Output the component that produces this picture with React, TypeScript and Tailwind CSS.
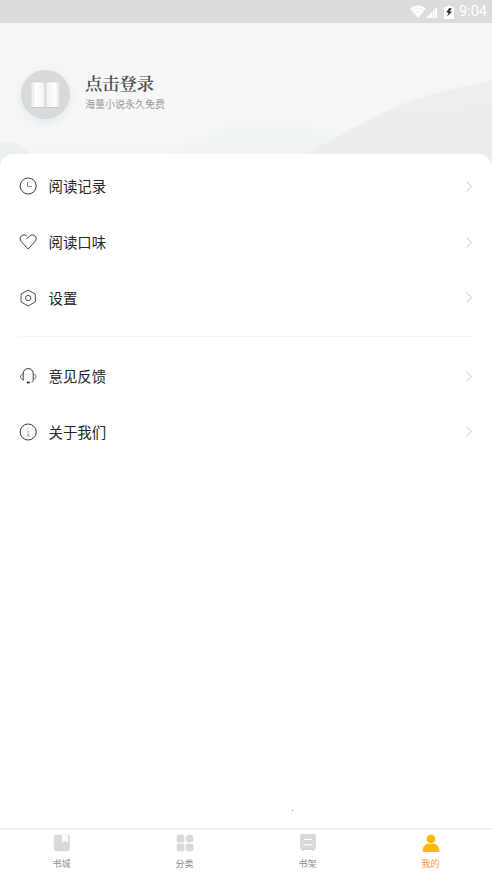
import React from 'react';

interface MenuItem {
  label: string;
  icon: React.ReactNode;
}

interface Tab {
  label: string;
  icon: React.ReactNode;
  active?: boolean;
}

const lineIcon = {
  width: 18,
  height: 18,
  viewBox: '0 0 18 18',
  fill: 'none',
  stroke: 'currentColor',
  strokeWidth: 0.9,
} as const;

const readingItems: MenuItem[] = [
  {
    label: '阅读记录',
    icon: (
      <svg {...lineIcon}>
        <circle cx="9.2" cy="9" r="8" />
        <path d="M8.5 5v4.5h4.3" stroke="#777" />
      </svg>
    ),
  },
  {
    label: '阅读口味',
    icon: (
      <svg {...lineIcon}>
        <path d="M7.8 3.2C6.3 1.5 3.8 1.5 2.3 3 .8 4.5.8 6.9 2.3 8.5L9.2 16 16 8.5c1.5-1.6 1.5-4 0-5.500s-3.9-1.500-5.400 0L7.500 6.200" />
      </svg>
    ),
  },
  {
    label: '设置',
    icon: (
      <svg {...lineIcon} strokeWidth={0.8}>
        <path d="m9.2 1.1 7.1 3.9v8l-7.1 3.9L2.1 13V5Z" strokeLinejoin="round" />
        <circle cx="9.2" cy="9" r="2.7" />
      </svg>
    ),
  },
];

const supportItems: MenuItem[] = [
  {
    label: '意见反馈',
    icon: (
      <svg {...lineIcon}>
        <path d="M4.2 13.5V6.8c0-3.200 2.200-5.300 5-5.300s5 2.100 5 5.300v6.700c0 .9-.6 1.400-1.600 1.600" />
        <path d="M4.2 6.500 1.500 8.600v2.200l2.700 2M14.200 6.500l2.700 2.100v2.200l-2.700 2" stroke="#666" />
        <path d="M7.800 15.500h3" strokeWidth="1.6" />
      </svg>
    ),
  },
  {
    label: '关于我们',
    icon: (
      <svg {...lineIcon}>
        <circle cx="9.2" cy="9" r="8" />
        <path d="M9.2 4.500v1.300M8.200 7.800h1v5M7.700 13h3" stroke="#999" />
      </svg>
    ),
  },
];

const tabs: Tab[] = [
  {
    label: '书城',
    icon: (
      <svg width="18" height="18" viewBox="0 0 18 18">
        <rect x=".8" y=".8" width="16" height="16.5" rx="2" fill="currentColor" />
        <path d="M9 1h5.800v7.800L12 6.800 9 8.800Z" fill="#fff" />
      </svg>
    ),
  },
  {
    label: '分类',
    icon: (
      <svg width="18" height="18" viewBox="0 0 18 18" fill="currentColor">
        <rect x=".8" y=".8" width="7.6" height="7.6" rx="1.2" />
        <circle cx="13.6" cy="4.6" r="3.9" />
        <rect x=".8" y="9.7" width="7.6" height="7.6" rx="1.2" />
        <rect x="9.8" y="9.7" width="7.6" height="7.6" rx="1.2" />
      </svg>
    ),
  },
  {
    label: '书架',
    icon: (
      <svg width="18" height="18" viewBox="0 0 18 18">
        <path d="M3 0h12a2 2 0 0 1 2 2v12a2 2 0 0 1-1.500 1.900l-.5 1.100h-2l-.5-1h-7l-.5 1H3l-.5-1.100A2 2 0 0 1 1 14V2a2 2 0 0 1 2-2Z" fill="currentColor" />
        <path d="M5 5.300h8M4.500 10.800h9" stroke="#fff" strokeWidth="1.2" />
      </svg>
    ),
  },
  {
    label: '我的',
    active: true,
    icon: (
      <svg width="18" height="18" viewBox="0 0 18 18" fill="#fdb800">
        <circle cx="9" cy="5" r="4.4" />
        <path d="M.6 16.500C1 12.300 4 10 6.300 9.600c1.700.9 3.700.9 5.400 0C14 10 17 12.300 17.400 16.500c0 .9-.4 1.400-1.200 1.400H1.800C1 17.900.6 17.400.6 16.500Z" />
      </svg>
    ),
  },
];

function StatusBar() {
  return (
    <div className="flex h-[23px] shrink-0 items-center justify-end bg-[#dcdcdc] pr-[5px] text-white">
      <svg width="16" height="13" viewBox="0 0 16 13" fill="currentColor">
        <path d="M0 3.500C4.500-.5 11.500-.5 16 3.500L8 13Z" />
        <path d="M1.800 5.300c3.700-2.800 8.700-2.800 12.400 0M4 7.800c2.500-1.700 5.500-1.700 8 0" fill="none" stroke="#dcdcdc" strokeWidth=".5" />
      </svg>
      <svg width="12" height="12" viewBox="0 0 12 12" fill="currentColor">
        <path d="M0 12 11 1v11Z" />
        <path d="M6.500 4v8M9 2v10" stroke="#dcdcdc" strokeWidth=".6" />
      </svg>
      <svg className="ml-[6px] mr-px" width="10" height="14" viewBox="0 0 10 14">
        <path d="M0 2h3V.5h4V2h3v12H0Z" fill="currentColor" />
        <path d="M5.300 3 2.200 7.200l2.300.6L3 11.500l5-4.800-2.500-.5L8 3.500Z" fill="#333" />
      </svg>
      <span className="ml-[4px] pt-[2px] font-[Roboto,sans-serif] text-[14.5px] leading-none">9:04</span>
    </div>
  );
}

function Landscape() {
  return (
    <svg className="absolute inset-0 h-full w-full" viewBox="0 0 492 150" preserveAspectRatio="none">
      <defs>
        <linearGradient id="sky" x1="0" y1="0" x2="0" y2="1">
          <stop offset="0" stopColor="#f6f6f6" />
          <stop offset=".6" stopColor="#f6f7f8" />
          <stop offset="1" stopColor="#f3f5f6" />
        </linearGradient>
        <linearGradient id="hill" x1="0" y1="0" x2="0" y2="1">
          <stop offset="0" stopColor="#eeeeee" />
          <stop offset="1" stopColor="#ececec" />
        </linearGradient>
        <filter id="soft">
          <feGaussianBlur stdDeviation="1.2" />
        </filter>
        <filter id="haze">
          <feGaussianBlur stdDeviation="5" />
        </filter>
      </defs>
      <rect width="492" height="150" fill="url(#sky)" />
      <path d="M130 155C180 118 195 122 222 106S270 98 335 108V155Z" fill="#f1f4f5" filter="url(#haze)" />
      <g filter="url(#soft)">
        <path d="M-5 121c14-5 24-1 34 8v26H-5Z" fill="#eceff0" />
        <path d="M290 137C315 127 336 113 359 102 375 93 386 88 398 83 425 72 455 65 500 56V155H290Z" fill="url(#hill)" />
      </g>
      <path d="M375 103c38-9 62-5 125-23v13c-58 14-79 5-125 10ZM345 132c50-14 93-5 150-14v12Z" fill="#e6e8e7" opacity=".3" filter="url(#haze)" />
    </svg>
  );
}

function Avatar() {
  return (
    <div className="flex h-[49px] w-[49px] items-center justify-center rounded-full bg-[#d7d9da] shadow-[0_3px_8px_rgba(190,205,210,0.35)]">
      <svg width="31" height="28" viewBox="0 0 31 28">
        <defs>
          <linearGradient id="pages" x1="0" y1="0" x2="1" y2="0">
            <stop offset="0" stopColor="#f0f0f0" />
            <stop offset=".15" stopColor="#fff" />
            <stop offset=".4" stopColor="#f7f7f7" />
            <stop offset=".5" stopColor="#d9dadb" />
            <stop offset=".57" stopColor="#f3f3f3" />
            <stop offset=".88" stopColor="#fff" />
            <stop offset="1" stopColor="#e3e3e3" />
          </linearGradient>
        </defs>
        <path d="M2 3h27v24H2Z" fill="#c6c9ca" />
        <path d="M1.500 2C6 1 11 1 15.500 2.500 20 1 25 1 29.500 2v24H1.500Z" fill="url(#pages)" />
        <path d="M3.500 2.500v23.300M27.500 2.500v23.300" stroke="#ddd" strokeWidth=".5" />
      </svg>
    </div>
  );
}

function MenuRow({ label, icon }: MenuItem) {
  return (
    <li className="flex h-[55.7px] items-center text-[#252525]">
      {icon}
      <span className="ml-[11.5px] text-[14.4px] leading-5">{label}</span>
      <svg className="ml-auto" width="8" height="11" viewBox="0 0 8 11" fill="none" stroke="#c6c6c6">
        <path d="m1.500.7 5 4.800-5 4.800" />
      </svg>
    </li>
  );
}

export default function App() {
  return (
    <div className="flex h-[875px] w-[492px] flex-col overflow-hidden bg-white font-['Noto_Sans_CJK_SC',sans-serif]">
      <StatusBar />

      {/* Profile header */}
      <header className="relative h-[150px] shrink-0">
        <Landscape />
        <div className="relative flex items-start pl-[21px] pt-[47px]">
          <Avatar />
          <div className="ml-[15px] pt-px">
            <h1 className="font-['Noto_Serif_CJK_SC','Noto_Serif_SC','Noto_Sans_CJK_SC',serif] text-[17.3px] font-semibold leading-[24px] text-[#4b4b4b]">点击登录</h1>
            <p className="text-[10px] leading-[17px] text-[#999]">海量小说永久免费</p>
          </div>
        </div>
      </header>

      {/* Menu sheet */}
      <main className="relative -mt-[19px] flex-1 rounded-t-[14px] bg-white px-[19px] pt-[4.6px]">
        <ul>
          {readingItems.map(item => <MenuRow key={item.label} {...item} />)}
        </ul>
        <div className="mb-[11px] mt-[10.5px] h-px bg-[#f5f5f5]" />
        <ul>
          {supportItems.map(item => <MenuRow key={item.label} {...item} />)}
        </ul>
        <span className="absolute bottom-[17px] left-[292px] h-px w-px bg-[#777]" />
      </main>

      {/* Tab bar */}
      <nav className="flex h-[47px] shrink-0 border-t-2 border-[#efefef]">
        {tabs.map(({ label, icon, active }) => (
          <div key={label} className="flex flex-1 flex-col items-center pt-[4px] text-[#d8d8d8]">
            {icon}
            <span className={`mt-[5px] text-[9px] leading-[13px] ${active ? 'text-[#ff982f]' : 'text-[#8c8c8c]'}`}>{label}</span>
          </div>
        ))}
      </nav>
    </div>
  );
}
